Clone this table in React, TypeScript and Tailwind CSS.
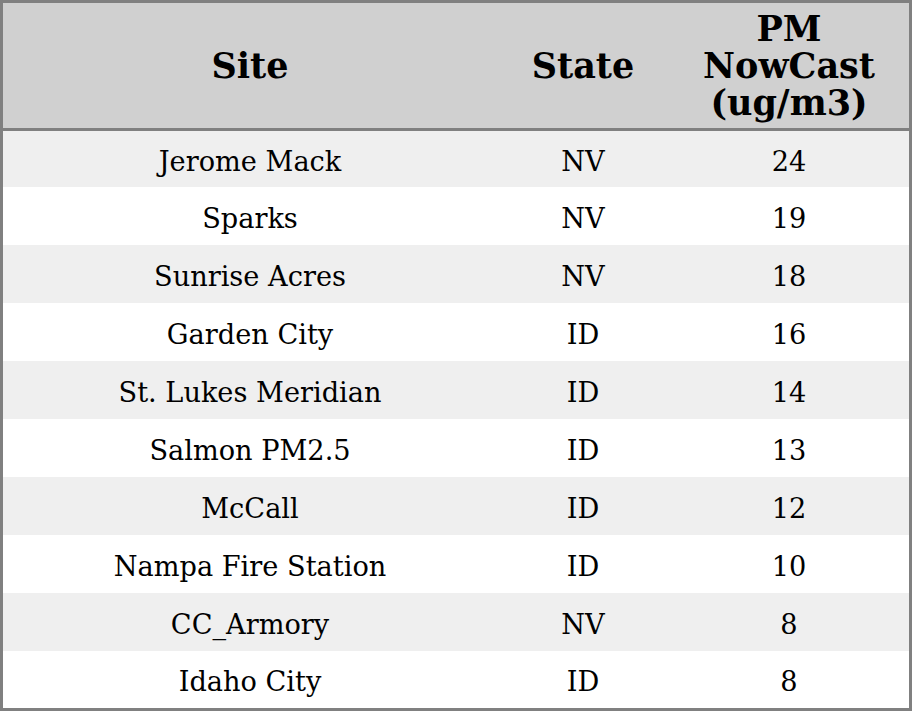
const rows = [
  { site: "Jerome Mack", state: "NV", pm: "24" },
  { site: "Sparks", state: "NV", pm: "19" },
  { site: "Sunrise Acres", state: "NV", pm: "18" },
  { site: "Garden City", state: "ID", pm: "16" },
  { site: "St. Lukes Meridian", state: "ID", pm: "14" },
  { site: "Salmon PM2.5", state: "ID", pm: "13" },
  { site: "McCall", state: "ID", pm: "12" },
  { site: "Nampa Fire Station", state: "ID", pm: "10" },
  { site: "CC_Armory", state: "NV", pm: "8" },
  { site: "Idaho City", state: "ID", pm: "8" },
]

const cols = "grid grid-cols-[494px_172px_1fr]"

const App = () => {
  return (
    <main
      className="w-[912px] h-[711px] bg-white text-black"
      style={{ fontFamily: '"DejaVu Serif", "Liberation Serif", serif' }}
    >
      <div className="flex h-full flex-col border-[3px] border-[#808080]">
        <div
          className={`${cols} h-[128px] shrink-0 items-center border-b-[3px] border-[#808080] bg-[#d0d0d0] text-center text-[35px] font-bold leading-[37px]`}
        >
          <div>Site</div>
          <div>State</div>
          <div>
            PM
            <br />
            NowCast
            <br />
            (ug/m3)
          </div>
        </div>
        {rows.map((r, i) => (
          <div
            key={r.site}
            className={`${cols} ${i === 0 ? "h-[56px]" : i === rows.length - 1 ? "h-[57px]" : "h-[58px]"} ${i % 2 === 0 ? "bg-[#efefef]" : "bg-white"} shrink-0 items-center pt-[6px] text-center text-[27.2px]`}
          >
            <div>{r.site}</div>
            <div>{r.state}</div>
            <div>{r.pm}</div>
          </div>
        ))}
      </div>
    </main>
  )
}

export default App
